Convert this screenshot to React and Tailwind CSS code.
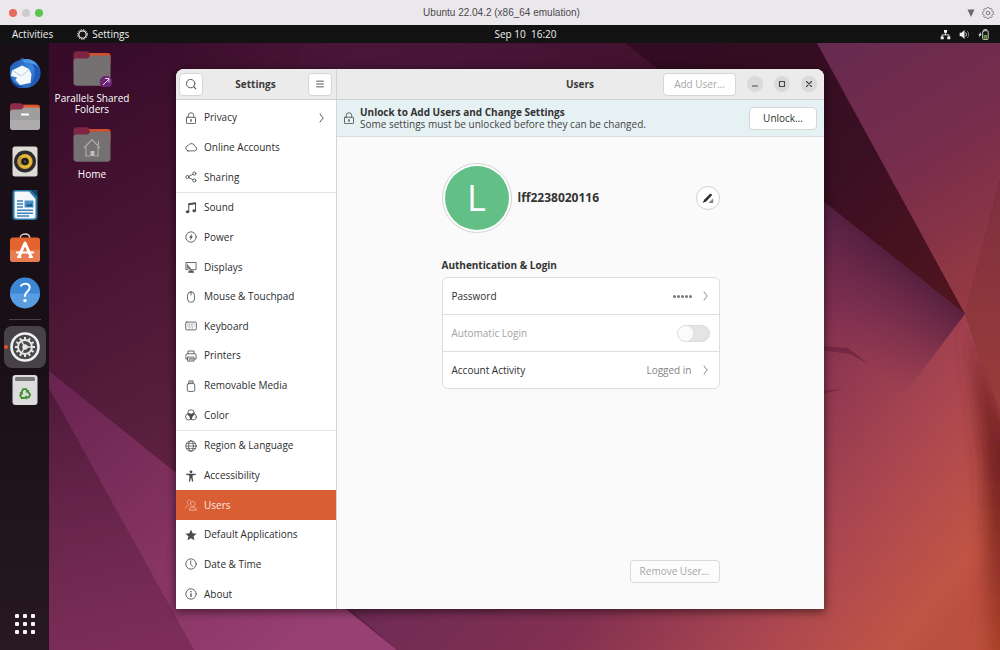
import React from "react";

const UI = "font-['Open_Sans','Noto_Sans',sans-serif]";

/* ---------- Symbolic icons, drawn on a 16 x 16 grid ---------- */

function Sym({ children, className = "size-3" }) {
  return (
    <svg
      viewBox="0 0 16 16"
      className={"shrink-0 " + className}
      fill="none"
      stroke="currentColor"
      strokeWidth="1.1"
      strokeLinecap="round"
      strokeLinejoin="round"
      aria-hidden="true"
    >
      {children}
    </svg>
  );
}

const icons = {
  privacy: (
    <>
      <rect x="2" y="7" width="12" height="8.4" rx="0.8" />
      <path d="M4.4 7V4.600a3.600 3.600 0 0 1 7.200 0V7" />
      <path d="M8 10.200v2" strokeWidth="1.800" />
    </>
  ),
  cloud: <path d="M3.800 13.200h8.800a3 3 0 0 0 .700-5.900A4.900 4.900 0 0 0 4.200 6 3.700 3.700 0 0 0 3.800 13.200Z" />,
  share: (
    <>
      <circle cx="3.200" cy="8" r="2.100" />
      <circle cx="12.400" cy="3.400" r="2.100" />
      <circle cx="12.400" cy="12.600" r="2.100" />
      <path d="m5.200 7 5.200-2.600M5.200 9l5.200 2.600" />
    </>
  ),
  sound: (
    <>
      <path d="M5 12.600V2.200L14 1v10.200" strokeWidth="1.300" />
      <path d="M5 3.200 14 2" strokeWidth="2" />
      <ellipse cx="3.300" cy="13" rx="1.900" ry="1.500" fill="currentColor" />
      <ellipse cx="12.200" cy="11.800" rx="1.900" ry="1.500" fill="currentColor" />
    </>
  ),
  power: (
    <>
      <circle cx="8" cy="8" r="6.900" />
      <path d="M9.200 3.600 5.400 8.800h2.200l-1 3.800 4-5.200H8.400Z" fill="currentColor" stroke="none" />
    </>
  ),
  displays: (
    <>
      <path d="M9.500 11.600h5.300V2H1.200v9.600h3" />
      <path d="M2.400 3.200 12 14.600H4.200l2.600-3.400-4.400-1.600Z" fill="currentColor" stroke="none" opacity="0.75" />
      <path d="M5 14.800h6.400" strokeWidth="1.600" />
    </>
  ),
  mouse: (
    <>
      <rect x="3.400" y="1.200" width="9.200" height="13.800" rx="4.400" />
      <path d="M8 1.400v4" />
    </>
  ),
  keyboard: (
    <>
      <rect x="0.900" y="2.800" width="14.200" height="10.400" rx="1.400" />
      <path d="M3.400 5.600h9.200M3.400 8h9.200M5 10.500h6" strokeDasharray="1 1.200" strokeLinecap="butt" />
    </>
  ),
  printer: (
    <>
      <path d="M4 5V1.400h8V5" />
      <path d="M3.600 12H1.200V6.600c0-.9.700-1.600 1.600-1.600h10.400c.9 0 1.600.7 1.600 1.600V12h-2.400" />
      <path d="M4 9.400h8v5.400H4Z" />
      <path d="M5.600 11.400h4.800M5.600 13h4.800" strokeWidth="0.800" />
    </>
  ),
  removable: (
    <>
      <rect x="3" y="4.800" width="10" height="10.400" rx="1.800" />
      <path d="M5.200 4.600V1.200h5.600v3.400" />
      <path d="M7 3h.3M9 3h.3" />
    </>
  ),
  color: (
    <>
      <circle cx="8" cy="5.200" r="4.200" />
      <circle cx="5" cy="10.400" r="4.200" />
      <circle cx="11" cy="10.400" r="4.200" />
      <path
        d="M8 13.200a4.200 4.200 0 0 0 1.200-2.800c0-.4 0-.7-.1-1 1.500-.3 2.400-1.200 2.900-2.700A4.200 4.200 0 0 0 8 7.400 4.200 4.200 0 0 0 4 6.700c.5 1.500 1.400 2.400 2.900 2.700-.1.300-.1.600-.1 1 0 1.100.4 2.100 1.200 2.800Z"
        fill="currentColor"
      />
    </>
  ),
  globe: (
    <>
      <circle cx="8" cy="8" r="6.900" />
      <ellipse cx="8" cy="8" rx="3.200" ry="6.900" />
      <path d="M1.200 8h13.600M2.200 4.600h11.600M2.200 11.400h11.600" strokeWidth="0.900" />
    </>
  ),
  accessibility: (
    <>
      <circle cx="8" cy="2.400" r="1.900" fill="currentColor" stroke="none" />
      <path
        d="M1.600 4.900h12.800v1.500l-4.300.9v2.200l.9 5.700H9.300L8.400 11h-.8l-.9 4.200H5l.9-5.700V7.300l-4.300-.9Z"
        fill="currentColor"
        stroke="none"
      />
    </>
  ),
  users: (
    <>
      <path d="M5.600 14.200c.3-2.300 2-3.500 4.700-3.500s4.400 1.200 4.800 3.500Z" />
      <path d="M7.400 6.200c0-2 1.200-3 2.900-3s2.900 1 2.900 3-1.200 3.700-2.900 3.700-2.900-1.700-2.900-3.700Z" />
      <path d="M.9 12c.2-1.800 1.500-2.900 3.500-3.100M5.200 7.600C3.800 7 3.100 5.700 3.100 4.300c0-1.800 1-2.800 2.700-2.800 1.100 0 1.900.300 2.400 1" opacity="0.700" />
    </>
  ),
  star: (
    <path
      d="m8 .8 2.100 4.900 5.300.5-4 3.500 1.200 5.200L8 12.200l-4.600 2.700 1.200-5.200-4-3.500 5.300-.5Z"
      fill="currentColor"
      stroke="none"
    />
  ),
  clock: (
    <>
      <circle cx="8" cy="8" r="6.900" />
      <path d="M7.600 3.600v4.600l2.400 3" />
    </>
  ),
  info: (
    <>
      <circle cx="8" cy="8" r="6.900" />
      <path d="M8 7.200v4.400" strokeWidth="1.800" strokeLinecap="butt" />
      <path d="M8 4.800v.1" strokeWidth="1.900" />
    </>
  ),
};

const menu = [
  { label: "Privacy", icon: "privacy", arrow: true },
  { label: "Online Accounts", icon: "cloud" },
  { label: "Sharing", icon: "share" },
  { label: "Sound", icon: "sound", divider: true },
  { label: "Power", icon: "power" },
  { label: "Displays", icon: "displays" },
  { label: "Mouse & Touchpad", icon: "mouse" },
  { label: "Keyboard", icon: "keyboard" },
  { label: "Printers", icon: "printer" },
  { label: "Removable Media", icon: "removable" },
  { label: "Color", icon: "color" },
  { label: "Region & Language", icon: "globe", divider: true },
  { label: "Accessibility", icon: "accessibility" },
  { label: "Users", icon: "users", active: true },
  { label: "Default Applications", icon: "star" },
  { label: "Date & Time", icon: "clock" },
  { label: "About", icon: "info" },
];

function Chevron({ className = "" }) {
  return (
    <svg viewBox="0 0 5 10" className={"h-[10px] w-[5px] shrink-0 " + className} fill="none" stroke="currentColor" aria-hidden="true">
      <path d="M.8.6C2 2.400 3.200 3.800 4.200 5 3.200 6.200 2 7.600.8 9.400" />
    </svg>
  );
}

/* ---------- Wallpaper ---------- */

function Wallpaper() {
  return (
    <svg
      viewBox="0 43 1000 607"
      preserveAspectRatio="none"
      className="absolute inset-0 h-full w-full"
      aria-hidden="true"
    >
      <defs>
        <linearGradient id="base" gradientUnits="userSpaceOnUse" x1="49" y1="80" x2="260" y2="440">
          <stop offset="0" stopColor="#380b2b" />
          <stop offset="0.45" stopColor="#4a1534" />
          <stop offset="1" stopColor="#602242" />
        </linearGradient>
        <linearGradient id="top" gradientUnits="userSpaceOnUse" x1="176" y1="0" x2="640" y2="0">
          <stop offset="0" stopColor="#4a1434" stopOpacity="0" />
          <stop offset="0.5" stopColor="#49163a" />
          <stop offset="1" stopColor="#43122f" />
        </linearGradient>
        <linearGradient id="floor" gradientUnits="userSpaceOnUse" x1="560" y1="300" x2="960" y2="610">
          <stop offset="0" stopColor="#5c2149" />
          <stop offset="0.1" stopColor="#702b55" />
          <stop offset="0.42" stopColor="#823051" />
          <stop offset="0.72" stopColor="#aa4650" />
          <stop offset="0.95" stopColor="#c15545" />
          <stop offset="1" stopColor="#bc5040" />
        </linearGradient>
        <linearGradient id="shade" gradientUnits="userSpaceOnUse" x1="895" y1="257" x2="830" y2="337">
          <stop offset="0" stopColor="#4c1c3c" stopOpacity="0.85" />
          <stop offset="1" stopColor="#6a2850" stopOpacity="0" />
        </linearGradient>
        <linearGradient id="ray" gradientUnits="userSpaceOnUse" x1="49" y1="371" x2="300" y2="650">
          <stop offset="0" stopColor="#672350" />
          <stop offset="0.5" stopColor="#83325f" />
          <stop offset="1" stopColor="#984074" />
        </linearGradient>
        <linearGradient id="corner" gradientUnits="userSpaceOnUse" x1="49" y1="390" x2="110" y2="650">
          <stop offset="0" stopColor="#501a3b" />
          <stop offset="0.6" stopColor="#6d274e" />
          <stop offset="1" stopColor="#7c2d59" />
        </linearGradient>
        <linearGradient id="dark" gradientUnits="userSpaceOnUse" x1="700" y1="43" x2="965" y2="314">
          <stop offset="0" stopColor="#320c22" />
          <stop offset="0.5" stopColor="#3a0f22" />
          <stop offset="1" stopColor="#52151f" />
        </linearGradient>
        <linearGradient id="facet" gradientUnits="userSpaceOnUse" x1="840" y1="43" x2="990" y2="290">
          <stop offset="0" stopColor="#672a50" />
          <stop offset="0.5" stopColor="#782d4b" />
          <stop offset="1" stopColor="#963a42" />
        </linearGradient>
        <linearGradient id="edge" gradientUnits="userSpaceOnUse" x1="985" y1="200" x2="985" y2="412">
          <stop offset="0" stopColor="#80303f" />
          <stop offset="1" stopColor="#9a3d3a" />
        </linearGradient>
        <linearGradient id="fold" gradientUnits="userSpaceOnUse" x1="0" y1="314" x2="0" y2="650">
          <stop offset="0" stopColor="#8a2f34" />
          <stop offset="0.45" stopColor="#742222" />
          <stop offset="1" stopColor="#a83f28" />
        </linearGradient>
        <filter id="soft" x="-100%" y="-10%" width="300%" height="120%">
          <feGaussianBlur stdDeviation="9 4" />
        </filter>
        <clipPath id="floorClip">
          <path d="M397 650 340 600 625 43 965 314 1000 412V650Z" />
        </clipPath>
      </defs>
      <rect y="43" width="1000" height="607" fill="url(#base)" />
      <rect x="176" y="43" width="824" height="200" fill="url(#top)" />
      <g clipPath="url(#floorClip)">
        <rect x="300" y="43" width="700" height="607" fill="url(#floor)" />
        <path d="M700 43 965 314 824 500V200Z" fill="url(#shade)" />
        <path d="M967 318 1030 480V680H990L984 470Z" fill="url(#fold)" filter="url(#soft)" />
      </g>
      <path d="M49 388V650H194Z" fill="url(#corner)" />
      <path d="M49 371V388L194 650H397Z" fill="url(#ray)" />
      <path d="M300 43H640L760 150H300Z" fill="url(#top)" />
      <path d="M625 43H817L965 314Z" fill="url(#dark)" />
      <path d="M817 43H1000V181L965 314Z" fill="url(#facet)" />
      <path d="M1000 181V412L965 314Z" fill="url(#edge)" />
      <path d="M820 346 848 348 869 364 850 354 820 350Z" fill="#742845" />
      <path d="M820 391 844 389 820 394Z" fill="#742845" />
    </svg>
  );
}

/* ---------- Dock ---------- */

function DockIcon({ children }) {
  return (
    <svg viewBox="0 0 32 32" className="size-8" aria-hidden="true">
      {children}
    </svg>
  );
}

const dockApps = [
  {
    name: "Thunderbird Mail",
    art: (
      <>
        <defs>
          <linearGradient id="tb" x1="0" y1="0" x2="1" y2="1">
            <stop offset="0" stopColor="#1c4fa8" />
            <stop offset="0.5" stopColor="#3a86dc" />
            <stop offset="1" stopColor="#1d56b4" />
          </linearGradient>
        </defs>
        <path d="M1.500 9C5 4.500 9 3.500 11 3c1-1.500 2.500-2 4-2.200-.8.8-1 1.500-1 1.500C24 .800 31.500 7.500 31.500 16c0 6.500-4.500 12.500-12 14.700L10 31C5 27.500 1.500 23.500 1 18 .800 14.500.800 11.500 1.500 9Z" fill="url(#tb)" />
        <path d="M13 3c7-3 15 1 17 10-4-6-9-8-14-7Z" fill="#5aa6ee" opacity="0.700" />
        <path d="M3 13.500 13 8.500 20 12 22.500 17 21.500 26 11 28 6.500 23 8 20.500 2 19Z" fill="#f5f8fc" />
        <path d="m3.500 13.600 9 5.400L20 12.500" fill="none" stroke="#b9cde4" strokeWidth="1" />
        <path d="M1.500 19.500c3 7.500 9 10.500 14 9.500-3 2.500-8 2-11-1-2-2-3-5-3-8.500Z" fill="#153f8c" />
        <path d="M23 7c4 5 4 15-2 21.500 8-2 11-8 10-14.500-1-4-4-7-8-7Z" fill="#1d58ba" />
      </>
    ),
  },
  {
    name: "Files",
    art: (
      <>
        <path d="M1 5.500C1 3.600 1.900 2.200 3.800 2.200h7.200c1.600 0 2 1.600 4 1.600h13c2 0 3 1 3 3V16H1Z" fill="#8c2c49" />
        <path d="M14 3.800h14c2 0 3 1 3 3V14H17Z" fill="#e2562b" />
        <path d="M1 11.500c0-2 1-3 3-3h8l3-2h13c2 0 3 .800 3 2.800v16.200c0 2.500-1 3.500-3.500 3.500h-23C2 29 1 28 1 25.500Z" fill="#9f9d9d" />
        <path d="M1 19h30v6.500c0 2.500-1 3.500-3.500 3.500h-23C2 29 1 28 1 25.500Z" fill="#adabab" />
        <rect x="12" y="12.500" width="8" height="2" rx="0.600" fill="#fff" />
      </>
    ),
  },
  {
    name: "Rhythmbox",
    art: (
      <>
        <rect x="3.500" y="1.500" width="25" height="30" rx="2.500" fill="#dedbd6" />
        <circle cx="16" cy="16.500" r="11" fill="#2c2c2e" />
        <circle cx="16" cy="16.500" r="7.600" fill="#e6b534" />
        <path d="M10.600 11.100a7.600 7.600 0 0 0 0 10.800L16 16.500Z" fill="#c0973a" />
        <circle cx="16" cy="16.500" r="3.800" fill="#1c1c20" />
        <circle cx="16" cy="16.500" r="1.200" fill="#55555c" />
      </>
    ),
  },
  {
    name: "LibreOffice Writer",
    art: (
      <>
        <path d="M6 1h16l6.500 6.500V28c0 2-1 3-3 3H6.500c-2 0-3-1-3-3V3.500C3.500 2 4.500 1 6 1Z" fill="#2a78aa" />
        <path d="M7 2.500h13L26.500 10v17.500c0 1.200-.8 2-2 2h-17c-1.200 0-2-.8-2-2V4c0-.900.600-1.500 1.500-1.500Z" fill="#f4f7fa" />
        <path d="M22 1h6.500v7Z" fill="#12486e" />
        <path d="M8 12h6M8 15h6M8 18h6M8 21.200h16M8 24.200h16M8 27h12" stroke="#3e82b8" strokeWidth="1.400" />
        <rect x="15.500" y="11.500" width="9" height="7" rx="0.500" fill="#4b93c6" />
        <path d="m16.500 17.500 2.500-3 1.500 1.500 1.500-2 2 3.500Z" fill="#1b5a8a" />
      </>
    ),
  },
  {
    name: "Ubuntu Software",
    art: (
      <>
        <path d="M11 6C11 3 12.500 1 16 1s5 2 5 5" fill="none" stroke="#e6cfc0" strokeWidth="1.300" />
        <rect x="1" y="4.500" width="30" height="24.500" rx="3" fill="#e4632f" />
        <path d="M1 17h30v9c0 2-1 3-3 3H4c-2 0-3-1-3-3Z" fill="#e67c4f" />
        <path d="m10 23.500 6-13.500L22 23.500" fill="none" stroke="#fff" strokeWidth="3" strokeLinejoin="round" />
        <path d="M8 19.500h16M9 24h2.500M20.500 24H23" stroke="#fff" strokeWidth="2.200" strokeLinecap="round" />
      </>
    ),
  },
  {
    name: "Help",
    art: (
      <>
        <circle cx="16" cy="15.500" r="15" fill="#3c86d6" />
        <path d="M1 16.500h30a15 15 0 0 1-30 0Z" fill="#589ce2" />
        <path d="M12 8.700c.8-1.400 2.200-2 4.200-2 2.700 0 4.500 1.500 4.500 3.900 0 3.500-4.700 4.200-4.700 8v.4" fill="none" stroke="#fff" strokeWidth="2" strokeLinecap="round" />
        <circle cx="16" cy="23.600" r="1.700" fill="#fff" />
      </>
    ),
  },
];

const teeth = [0, 30, 60, 90, 120, 150, 180, 210, 240, 270, 300, 330];

function Dock() {
  return (
    <nav aria-label="Dock" className="relative flex w-[49px] shrink-0 flex-col items-center bg-gradient-to-b from-[#190f16] from-50% to-[#271822] pt-2 pb-1">
      {dockApps.map((app) => (
        <button key={app.name} type="button" aria-label={app.name} className="flex h-11 w-full items-center justify-center">
          <DockIcon>{app.art}</DockIcon>
        </button>
      ))}
      <div className="my-1 h-px w-8 bg-[#4a4249]" />
      <button type="button" aria-label="Settings" aria-current="true" className="relative mt-[2px] flex size-[42px] items-center justify-center rounded-lg bg-[#474247]">
        <span className="absolute left-0 size-1 rounded-full bg-[#e2552a]" />
        <DockIcon>
          <circle cx="16" cy="16" r="14.800" fill="#f2f2f2" />
          <circle cx="16" cy="16" r="12.200" fill="#4c494d" />
          <circle cx="16" cy="16" r="7" fill="none" stroke="#e8e8e8" strokeWidth="1.900" />
          {teeth.map((a) => (
            <rect key={a} x="15" y="6" width="2" height="2.600" fill="#e8e8e8" transform={`rotate(${a} 16 16)`} />
          ))}
          <path d="M16 16 12.500 10.200M16 16h6.500M16 16 12.500 21.800" stroke="#e8e8e8" strokeWidth="1.400" />
          <circle cx="16" cy="16" r="2.700" fill="#e8e8e8" />
        </DockIcon>
      </button>
      <button type="button" aria-label="Trash" className="flex h-11 w-full items-center justify-center">
        <DockIcon>
          <rect x="3.500" y="1" width="25" height="30" rx="3" fill="#dcdcdc" />
          <rect x="6" y="3" width="20" height="4" rx="1.500" fill="#78787a" />
          <g transform="translate(16 20)" fill="#3f8f2c">
            {[0, 120, 240].map((a) => (
              <g key={a} transform={`rotate(${a})`}>
                <path d="M-4.200-2.600-2.400-5.800h4L3.200-3.600 4.300-4.300 3.700-.700.300-2.100l1.100-.6-1-1.300h-1.600L-2.400-1.700Z" />
              </g>
            ))}
          </g>
        </DockIcon>
      </button>
      <button type="button" aria-label="Show Applications" className="mt-auto flex h-11 w-full items-center justify-center">
        <DockIcon>
          {[8, 16, 24].map((y) =>
            [8, 16, 24].map((x) => (
              <rect key={x + "-" + y} x={x - 2} y={y - 2} width="4" height="4" rx="1" fill="#f6f2f5" />
            ))
          )}
        </DockIcon>
      </button>
    </nav>
  );
}

/* ---------- Desktop icons ---------- */

function Folder({ children }) {
  return (
    <svg viewBox="0 0 40 36" className="h-9 w-10" aria-hidden="true">
      <path d="M1.500 4C1.500 1.800 2.500.300 4.500.300H14c2.200 0 3 1.700 5 1.700h16.500c2 0 3 1 3 3V16h-37Z" fill="#7e2542" />
      <path d="M17 2h18.500c2 0 3 1 3 3V13H20Z" fill="#d14f2a" />
      <path d="M1.500 10.500c0-2 1-3 3-3h11l3.500-3h16.500c2 0 3 .800 3 2.800V31.500c0 2.300-1 3.300-3.500 3.300h-30c-2.500 0-3.500-1-3.500-3.300Z" fill="#757172" />
      {children}
    </svg>
  );
}

const desktopItem = "flex flex-col items-center gap-[6px] text-center text-[10px] leading-[11px] text-white";

function DesktopIcons() {
  return (
    <ul className="relative ml-[3px] flex w-20 flex-col gap-3 pt-2">
      <li>
        <a href="#shared" className={desktopItem}>
          <Folder>
            <circle cx="34" cy="31" r="6.300" fill="#6b2575" />
            <path d="m31 34 6-6M33 27.500h4v4" fill="none" stroke="#e9d8ec" strokeWidth="1" />
          </Folder>
          Parallels Shared Folders
        </a>
      </li>
      <li>
        <a href="#home" className={desktopItem}>
          <Folder>
            <path d="m12 21 8-8.500 8 8.500M14 20v9h4.500M26 20v9h-3.500M26.500 18v-4" fill="none" stroke="#b0adae" strokeWidth="1.100" />
            <path d="M18.500 29v-5h4v5Z" fill="#c2bfc0" />
          </Folder>
          Home
        </a>
      </li>
    </ul>
  );
}

/* ---------- Settings window ---------- */

const headerButton = "flex h-[23px] items-center justify-center rounded border border-[#d6d6d6] bg-white";

function Sidebar() {
  return (
    <aside className="flex w-[161px] shrink-0 flex-col border-r border-[#d4d4d4] bg-white">
      <header className="flex h-[31px] shrink-0 items-center justify-between border-b border-[#cfcfcf] bg-[#ebebeb] pr-1 pl-[3px]">
        <button type="button" aria-label="Search" className={headerButton + " w-6"}>
          <Sym className="size-3 text-[#4a4a4a]">
            <circle cx="7.500" cy="7.500" r="5.600" strokeWidth="1.200" />
            <path d="m11.600 11.600 2.800 2.800" strokeWidth="1.400" />
          </Sym>
        </button>
        <h1 className="text-[10px] font-bold text-[#3a3a3a]">Settings</h1>
        <button type="button" aria-label="Menu" className={headerButton + " w-6"}>
          <Sym className="size-3 text-[#4a4a4a]">
            <path d="M3.500 4.200h9M3.500 8h9M3.500 11.800h9" strokeWidth="1.200" />
          </Sym>
        </button>
      </header>
      <ul className="flex flex-1 flex-col pt-[3px]">
        {menu.map((item) => (
          <li
            key={item.label}
            className={
              "flex flex-1 " +
              (item.divider ? "border-t border-[#e2e2e2] " : "") +
              (item.active ? "bg-[#d95e33] text-[#fbe9e2]" : "text-[#2c2c2c]")
            }
          >
            <a
              href="#panel"
              aria-current={item.active ? "page" : undefined}
              className="flex flex-1 items-center gap-[7px] pr-3 pl-[9px] text-[10px] font-medium"
            >
              <Sym className={"size-3 " + (item.active ? "text-[#f3c3b0]" : "text-[#4a4a4a]")}>{icons[item.icon]}</Sym>
              <span className="flex-1">{item.label}</span>
              {item.arrow && <Chevron className="text-[#555]" />}
            </a>
          </li>
        ))}
      </ul>
    </aside>
  );
}

function WindowButton({ label, children }) {
  return (
    <button type="button" aria-label={label} className="flex size-4 items-center justify-center rounded-full bg-[#dadada] text-[#444]">
      <Sym className="size-4">{children}</Sym>
    </button>
  );
}

function UsersPanel() {
  return (
    <section id="panel" className="flex min-w-0 flex-1 flex-col bg-[#fafafa] text-[#2e2e2e]">
      <header className="grid h-[31px] shrink-0 grid-cols-[1fr_auto_1fr] items-center border-b border-[#cfcfcf] bg-[#ebebeb] pr-[7px] pl-[6px]">
        <span />
        <h2 className="text-[10px] font-bold text-[#3a3a3a]">Users</h2>
        <div className="flex items-center justify-end gap-[11px]">
          <button type="button" disabled className={headerButton + " w-[73px] text-[10px] text-[#a6a6a6]"}>
            Add User…
          </button>
          <WindowButton label="Minimize">
            <path d="M5.500 10h5" />
          </WindowButton>
          <WindowButton label="Maximize">
            <rect x="5.500" y="5.500" width="5" height="5" />
          </WindowButton>
          <WindowButton label="Close">
            <path d="m5.500 5.500 5 5M10.500 5.500l-5 5" />
          </WindowButton>
        </div>
      </header>

      <div className="flex h-[37px] shrink-0 items-center gap-[5px] border-b border-[#d5dfe1] bg-[#e6f1f4] pr-[7px] pl-[6px]">
        <Sym className="size-3 text-[#4a4a4a]">{icons.privacy}</Sym>
        <div className="flex-1 text-[10px] leading-3">
          <p className="font-bold text-[#333]">Unlock to Add Users and Change Settings</p>
          <p className="text-[#444]">Some settings must be unlocked before they can be changed.</p>
        </div>
        <button type="button" className={headerButton + " w-[68px] text-[10px] text-[#2e2e2e]"}>
          Unlock…
        </button>
      </div>

      <div className="mx-auto flex w-[278px] flex-1 flex-col pt-[26px] pb-[26px]">
        <div className="flex items-center gap-[6px]">
          <div className="flex size-[70px] items-center justify-center rounded-full border border-[#d2d2d2] bg-white">
            <span className="flex size-16 items-center justify-center rounded-full bg-[#62c087] text-4xl text-white">L</span>
          </div>
          <h3 className="flex-1 text-xs font-bold text-[#333]">lff2238020116</h3>
          <button type="button" aria-label="Edit name" className="flex size-6 items-center justify-center rounded-full border border-[#d2d2d2] bg-white text-[#2e2e2e]">
            <Sym className="size-3">
              <path d="M1 14.500 2.800 10.400 10.500 2.500c1-1 3.500.800 2.500 2.200L5.500 12.700Z" fill="currentColor" stroke="none" />
              <path d="M15 8.500v6H8.500Z" fill="currentColor" stroke="none" opacity="0.600" />
            </Sym>
          </button>
        </div>

        <h3 className="mt-[25px] text-[10px] leading-[14px] font-bold text-[#333]">Authentication &amp; Login</h3>
        <div className="mt-[5px] divide-y divide-[#dedede] rounded-md border border-[#dedede] bg-white text-[10px]">
          <button type="button" className="flex h-[37px] w-full items-center pr-[11px] pl-[9px]">
            <span className="flex-1 text-left font-medium">Password</span>
            <span className="mr-[11px] flex gap-px" role="img" aria-label="Password is set">
              {[0, 1, 2, 3, 4].map((n) => (
                <span key={n} className="size-[3px] rounded-full bg-[#777]" />
              ))}
            </span>
            <Chevron className="text-[#888]" />
          </button>
          <div className="flex h-[37px] items-center pr-[9px] pl-[9px] text-[#a3a3a3]">
            <label htmlFor="autologin" className="flex-1">
              Automatic Login
            </label>
            <input
              id="autologin"
              type="checkbox"
              role="switch"
              disabled
              className="h-[17px] w-[33px] appearance-none rounded-full border border-[#dcdcdc] bg-[#e4e4e4] before:block before:size-[15px] before:rounded-full before:bg-[#fbfbfb]"
            />
          </div>
          <button type="button" className="flex h-9 w-full items-center pr-[11px] pl-[9px]">
            <span className="flex-1 text-left font-medium">Account Activity</span>
            <span className="mr-[11px] text-[#858585]">Logged in</span>
            <Chevron className="text-[#888]" />
          </button>
        </div>

        <button type="button" disabled className="mt-auto flex h-[23px] w-[90px] items-center justify-center self-end rounded border border-[#d9d9d9] bg-[#fcfcfc] text-[10px] text-[#a6a6a6]">
          Remove User…
        </button>
      </div>
    </section>
  );
}

/* ---------- Bars ---------- */

function HostTitleBar() {
  return (
    <header className="grid h-[25px] shrink-0 grid-cols-[1fr_auto_1fr] items-center bg-[#ebe8ec] pr-[6px] pl-[9px] font-['Liberation_Sans',Arial,sans-serif]">
      <div className="flex items-center gap-[5px]">
        <button type="button" aria-label="Close" className="size-2 rounded-full bg-[#e5695e]" />
        <button type="button" aria-label="Minimize" className="size-2 rounded-full bg-[#cfccd0]" />
        <button type="button" aria-label="Zoom" className="size-2 rounded-full bg-[#5ec451]" />
      </div>
      <p className="text-[10px] text-[#4b494c]">Ubuntu 22.04.2 (x86_64 emulation)</p>
      <div className="flex items-center justify-end gap-[7px] text-[#6a686b]">
        <svg viewBox="0 0 8 8" className="size-2" aria-hidden="true">
          <path d="M.5.500h7L4 8Z" fill="currentColor" />
        </svg>
        <Sym className="size-3">
          <path
            d="m15.200 8-.2 1.700-1.700.7-.4.900.7 1.700-1.300 1.200-1.700-.8-.9.500-.6 1.500H6.900l-.7-1.500-.9-.5-1.700.8-1.300-1.200.7-1.700-.4-.9-1.700-.7L.8 8l.2-1.700 1.600-.7.400-.9-.7-1.700 1.300-1.200 1.700.8.900-.5L6.900.600h2.200l.6 1.500.9.500 1.700-.8 1.300 1.200-.7 1.700.4.900 1.700.7Z"
            strokeWidth="1"
          />
          <circle cx="8" cy="8" r="2.400" strokeWidth="1.100" />
        </Sym>
      </div>
    </header>
  );
}

function TopBar() {
  return (
    <div className="grid h-[18px] shrink-0 grid-cols-[1fr_auto_1fr] items-center bg-[#131313] pr-[11px] pl-3 text-[10px] text-[#f0f0f0]">
      <div className="flex items-center gap-6">
        <button type="button">Activities</button>
        <button type="button" className="flex items-center gap-1">
          <Sym className="size-[11px]">
            <circle cx="8" cy="8" r="5.400" strokeWidth="1.800" />
            <circle cx="8" cy="8" r="7.200" strokeWidth="1.400" strokeDasharray="1.900 1.870" strokeLinecap="butt" />
          </Sym>
          Settings
        </button>
      </div>
      <time className="pl-[50px] whitespace-pre">Sep 10  16:20</time>
      <div className="flex items-center justify-end gap-2">
        <Sym className="size-[11px]">
          <path d="M8 4v4M3 12V8.500h10V12" strokeWidth="1.300" />
          <path d="M5.800 1.500h4.400v4H5.800ZM1 11h4.400v4H1ZM10.600 11H15v4h-4.400Z" fill="currentColor" stroke="none" />
        </Sym>
        <Sym className="size-[11px]">
          <path d="M1 5.500h2.500L8 1.500v13l-4.500-4H1Z" fill="currentColor" stroke="none" />
          <path d="M10 5.500c1.200 1.400 1.200 3.600 0 5" strokeWidth="1.400" />
          <path d="M12.500 3.500c2.300 2.500 2.300 6.500 0 9" strokeWidth="1.300" opacity="0.500" />
        </Sym>
        <Sym className="size-[11px]">
          <path d="M4.500 4 .5 9h2L1.500 12.500 5.500 7.500h-2Z" fill="currentColor" stroke="none" />
          <rect x="6.800" y="2.600" width="8" height="12.600" rx="1.200" strokeWidth="1.200" />
          <path d="M9 1.200h3.600" strokeWidth="1.500" />
          <rect x="8.200" y="8.500" width="5.200" height="5.500" fill="#5f8f3c" stroke="none" />
        </Sym>
      </div>
    </div>
  );
}

export default function App() {
  return (
    <div className={"flex min-h-screen flex-col " + UI}>
      <HostTitleBar />
      <TopBar />
      <main className="relative flex min-h-[560px] flex-1 overflow-hidden bg-[#4a1534]">
        <Wallpaper />
        <Dock />
        <DesktopIcons />
        <div className="absolute top-[26px] right-[176px] bottom-[41px] left-[176px] flex overflow-hidden rounded-t-lg shadow-[0_2px_8px_1px_rgba(0,0,0,0.5)]">
          <Sidebar />
          <UsersPanel />
        </div>
      </main>
    </div>
  );
}
